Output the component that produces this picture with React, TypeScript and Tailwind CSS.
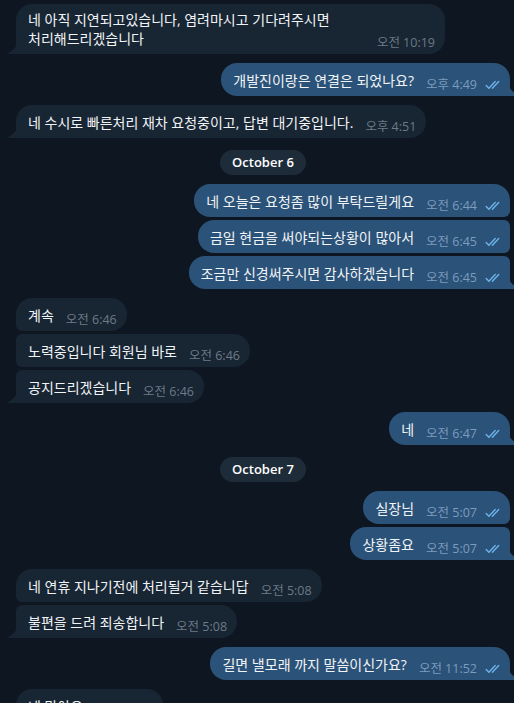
import React from "react";

type Side = "in" | "out";

interface Message {
  type: "msg";
  side: Side;
  lines: string[];
  time: string;
  wide?: boolean;
}

interface DateMark {
  type: "date";
  label: string;
}

type Item = Message | DateMark;

const items: Item[] = [
  {
    type: "msg",
    side: "in",
    lines: ["네 아직 지연되고있습니다, 염려마시고 기다려주시면", "처리해드리겠습니다"],
    time: "오전 10:19",
    wide: true,
  },
  { type: "msg", side: "out", lines: ["개발진이랑은 연결은 되었나요?"], time: "오후 4:49" },
  { type: "msg", side: "in", lines: ["네 수시로 빠른처리 재차 요청중이고, 답변 대기중입니다."], time: "오후 4:51" },
  { type: "date", label: "October 6" },
  { type: "msg", side: "out", lines: ["네 오늘은 요청좀 많이 부탁드릴게요"], time: "오전 6:44" },
  { type: "msg", side: "out", lines: ["금일 현금을 써야되는상황이 많아서"], time: "오전 6:45" },
  { type: "msg", side: "out", lines: ["조금만 신경써주시면 감사하겠습니다"], time: "오전 6:45" },
  { type: "msg", side: "in", lines: ["계속"], time: "오전 6:46" },
  { type: "msg", side: "in", lines: ["노력중입니다 회원님 바로"], time: "오전 6:46" },
  { type: "msg", side: "in", lines: ["공지드리겠습니다"], time: "오전 6:46" },
  { type: "msg", side: "out", lines: ["네"], time: "오전 6:47" },
  { type: "date", label: "October 7" },
  { type: "msg", side: "out", lines: ["실장님"], time: "오전 5:07" },
  { type: "msg", side: "out", lines: ["상황좀요"], time: "오전 5:07" },
  { type: "msg", side: "in", lines: ["네 연휴 지나기전에 처리될거 같습니답"], time: "오전 5:08" },
  { type: "msg", side: "in", lines: ["불편을 드려 죄송합니다"], time: "오전 5:08" },
  { type: "msg", side: "out", lines: ["길면 낼모래 까지 말씀이신가요?"], time: "오전 11:52" },
  { type: "msg", side: "in", lines: ["네 맞아요"], time: "오전 11:53" },
];

function sameSide(a: Item | undefined, side: Side) {
  return !!a && a.type === "msg" && a.side === side;
}

function DoubleCheck() {
  return (
    <svg width="17" height="10" viewBox="0 0 17 10" fill="none" className="shrink-0">
      <path d="M1.2 5.6 L3.9 8.3 L10.2 1.6" stroke="#6cb4ec" strokeWidth="1.4" strokeLinecap="round" strokeLinejoin="round" />
      <path d="M7.4 8.3 L13.7 1.6" stroke="#6cb4ec" strokeWidth="1.4" strokeLinecap="round" />
    </svg>
  );
}

function Tail({ side }: { side: Side }) {
  if (side === "in") {
    return (
      <svg width="9" height="11" viewBox="0 0 9 11" className="absolute bottom-0 -left-[8px]">
        <path d="M9 0 V11 H0.8 C0.2 11 0 10.4 0.5 10 C4 7.5 8.4 5 9 0 Z" fill="#182533" />
      </svg>
    );
  }
  return (
    <svg width="9" height="11" viewBox="0 0 9 11" className="absolute bottom-0 -right-[8px]">
      <path d="M0 0 V11 H8.2 C8.8 11 9 10.4 8.5 10 C5 7.5 0.6 5 0 0 Z" fill="#2b5278" />
    </svg>
  );
}

function Bubble({ msg, prev, next, first }: { msg: Message; prev?: Item; next?: Item; first: boolean }) {
  const groupedTop = sameSide(prev, msg.side);
  const groupedBottom = sameSide(next, msg.side);
  const tail = !groupedBottom;
  const isOut = msg.side === "out";

  const margin = first ? "" : groupedTop ? "mt-[3px]" : "mt-[9px]";
  const padY = msg.lines.length > 1 ? "pt-[6px] pb-[6px]" : "pt-[8px] pb-[6px]";

  let corners = "rounded-2xl";
  if (isOut) {
    corners +=
      (groupedTop ? " rounded-tr-[6px]" : " rounded-tr-2xl") +
      (groupedBottom ? " rounded-br-[6px]" : " rounded-br-none");
  } else {
    corners +=
      (groupedTop ? " rounded-tl-[6px]" : " rounded-tl-2xl") +
      (groupedBottom ? " rounded-bl-[6px]" : " rounded-bl-none");
  }

  return (
    <div className={`flex ${isOut ? "justify-end" : "justify-start"} ${margin}`}>
      <div
        className={`relative flex items-end pl-3 ${padY} ${isOut ? "pr-[8px] bg-[#2b5278]" : "pr-[10px] bg-[#182533]"} ${corners} ${msg.wide ? "w-[429px]" : ""}`}
      >
        <div className="flex-1 text-[14px] leading-[19px] text-[#f1f4f7] whitespace-nowrap">
          {msg.lines.map((l, i) => (
            <div key={i}>{l}</div>
          ))}
        </div>
        <div className="flex items-center gap-[8px] ml-3 -mb-[3px]">
          <span className={`text-[12.5px] leading-[16px] whitespace-nowrap ${isOut ? "text-[#7b9cbf]" : "text-[#6d7a86]"}`}>
            {msg.time}
          </span>
          {isOut && <DoubleCheck />}
        </div>
        {tail && <Tail side={msg.side} />}
      </div>
    </div>
  );
}

export default function App() {
  return (
    <div
      className="w-full h-screen overflow-hidden bg-[#0e1621]"
      style={{ fontFamily: '"Open Sans", "Noto Sans CJK KR", sans-serif' }}
    >
      <div className="w-[526px] px-4 pt-1 pb-4">
        {items.map((item, i) => {
          const prev = items[i - 1];
          const next = items[i + 1];
          if (item.type === "date") {
            return (
              <div key={i} className="flex justify-center mt-3">
                <div className="h-[25px] px-3 rounded-full bg-[#1e2c3a] text-white text-[13px] font-semibold flex items-center">
                  {item.label}
                </div>
              </div>
            );
          }
          return <Bubble key={i} msg={item} prev={prev} next={next} first={i === 0} />;
        })}
      </div>
    </div>
  );
}
